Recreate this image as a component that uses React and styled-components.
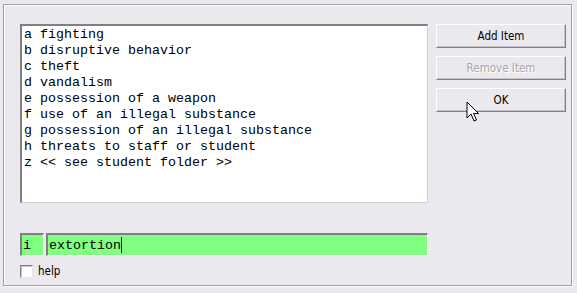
import React from "react";
import styled, { createGlobalStyle } from "styled-components";

const GlobalStyle = createGlobalStyle`
  html, body {
    margin: 0;
    padding: 0;
    background: #ece9ee;
  }
`;

const items = [
  "a fighting",
  "b disruptive behavior",
  "c theft",
  "d vandalism",
  "e possession of a weapon",
  "f use of an illegal substance",
  "g possession of an illegal substance",
  "h threats to staff or student",
  "z << see student folder >>",
];

export default function App() {
  return (
    <>
      <GlobalStyle />
      <Window>
        <Frame>
          <Top>
            <ListBox>
              {items.map((t) => (
                <ListItem key={t}>{t}</ListItem>
              ))}
            </ListBox>
            <Buttons>
              <Button>Add Item</Button>
              <Button disabled>Remove Item</Button>
              <Button>OK</Button>
            </Buttons>
          </Top>
          <EntryRow>
            <Field $w="24px">i</Field>
            <Field $grow>
              extortion<Caret />
            </Field>
          </EntryRow>
          <CheckRow>
            <Box />
            <span>help</span>
          </CheckRow>
        </Frame>
        <Pointer width="14" height="22" viewBox="0 0 14 22">
          <path
            d="M1 1 L1 17 L5 13 L8 20 L10.5 19 L7.5 12.5 L12.5 12.5 Z"
            fill="#fff"
            stroke="#000"
            strokeWidth="1"
            strokeLinejoin="miter"
          />
        </Pointer>
      </Window>
    </>
  );
}

const Window = styled.div`
  position: relative;
  width: 577px;
  height: 293px;
  padding: 4px 5px 7px 3px;
  box-sizing: border-box;
  background: #ece9ee;
`;

const Frame = styled.div`
  height: 100%;
  box-sizing: border-box;
  border: 1px solid #a0a0a4;
  box-shadow: inset 1px 1px 0 #ffffff, 1px 1px 0 #ffffff;
  padding: 19px 0 0 16px;
  display: flex;
  flex-direction: column;
`;

const Top = styled.div`
  display: flex;
  gap: 8px;
`;

const ListBox = styled.div`
  width: 408px;
  height: 179px;
  box-sizing: border-box;
  background: #ffffff;
  border-top: 2px solid #808080;
  border-left: 2px solid #808080;
  border-right: 1px solid #d4d0d8;
  border-bottom: 1px solid #d4d0d8;
  padding: 1px 0 0 2px;
  font-family: "Liberation Mono", "Courier New", monospace;
  font-size: 13.33px;
  color: #000;
`;

const ListItem = styled.div`
  height: 16px;
  line-height: 16px;
  white-space: pre;
`;

const Buttons = styled.div`
  display: flex;
  flex-direction: column;
  gap: 8px;
`;

const Button = styled.button`
  width: 130px;
  height: 24px;
  box-sizing: border-box;
  margin: 0;
  padding: 0;
  background: #ece9ee;
  border-top: 1px solid #ffffff;
  border-left: 1px solid #ffffff;
  border-right: 1px solid #808080;
  border-bottom: 1px solid #808080;
  box-shadow: inset -1px -1px 0 #c8c4cc;
  font-family: "DejaVu Sans Condensed", "DejaVu Sans", sans-serif;
  font-size: 11.5px;
  color: ${(p) => (p.disabled ? "#a8a6aa" : "#000")};
  text-shadow: ${(p) => (p.disabled ? "1px 1px 0 #fff" : "none")};
`;

const EntryRow = styled.div`
  display: flex;
  gap: 2px;
  margin-top: 30px;
  width: 408px;
`;

const Field = styled.div`
  width: ${(p) => p.$w || "auto"};
  flex: ${(p) => (p.$grow ? 1 : "none")};
  height: 23px;
  box-sizing: border-box;
  background: #80ff80;
  border-top: 2px solid #808080;
  border-left: 2px solid #808080;
  border-right: 1px solid #ffffff;
  border-bottom: 1px solid #ffffff;
  padding-left: 1px;
  font-family: "Liberation Mono", "Courier New", monospace;
  font-size: 13.33px;
  line-height: 19px;
  color: #000;
  display: flex;
  align-items: center;
`;

const Caret = styled.span`
  display: inline-block;
  width: 1px;
  height: 16px;
  background: #400040;
`;

const CheckRow = styled.div`
  display: flex;
  align-items: center;
  gap: 5px;
  margin-top: 8px;
  font-family: "DejaVu Sans Condensed", "DejaVu Sans", sans-serif;
  font-size: 11.5px;
  color: #000;
`;

const Box = styled.div`
  width: 13px;
  height: 13px;
  box-sizing: border-box;
  background: #fff;
  border-top: 1px solid #808080;
  border-left: 1px solid #808080;
  border-right: 1px solid #e8e6ea;
  border-bottom: 1px solid #e8e6ea;
  box-shadow: inset 1px 1px 0 #c8c4cc;
`;

const Pointer = styled.svg`
  position: absolute;
  left: 466px;
  top: 101px;
`;
